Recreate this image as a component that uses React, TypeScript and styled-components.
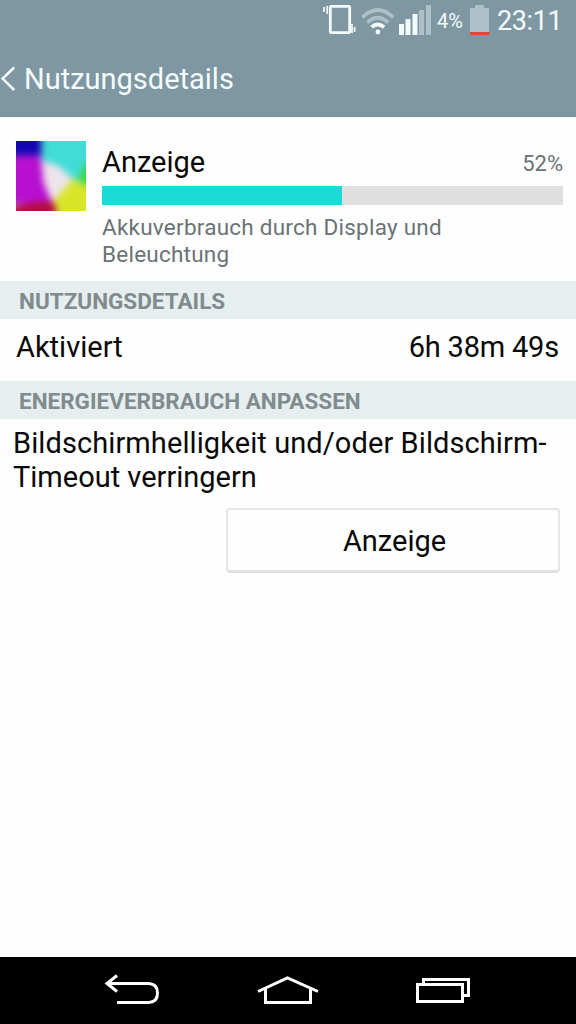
import React from 'react';
import styled, { createGlobalStyle } from 'styled-components';

const GlobalStyle = createGlobalStyle`
  * { box-sizing: border-box; }
  body { margin: 0; background: #fefefe; font-family: Roboto, "Liberation Sans", sans-serif; color: #080808; }
`;

const Screen = styled.div`
  width: 576px;
  height: 1024px;
  display: flex;
  flex-direction: column;
  background: #fefefe;
  overflow: hidden;
`;

const Header = styled.header`
  height: 117px;
  background: #7f97a2;
  border-bottom: 1px solid #788c96;
  color: #f4fbfd;
`;

const StatusBar = styled.div`
  height: 42px;
  display: flex;
  justify-content: flex-end;
  padding-right: 13px;
`;

const StatusIcons = styled.svg`
  flex: none;
  display: block;
`;

const Label = styled.span<{ $size: number; $line: number; $spacing?: number; $color?: string }>`
  display: block;
  white-space: nowrap;
  font-size: ${(p) => p.$size}px;
  line-height: ${(p) => p.$line}px;
  letter-spacing: ${(p) => p.$spacing ?? 0}px;
  color: ${(p) => p.$color ?? 'inherit'};
`;

const BatteryLevel = styled.div`
  width: 33px;
  padding-left: 1px;
`;

const BatteryIcon = styled.svg`
  flex: none;
`;

const Clock = styled.div`
  width: 72px;
  padding-left: 6px;
`;

const TitleBar = styled.div`
  height: 74px;
  display: flex;
  align-items: center;
`;

const BackChevron = styled.svg`
  flex: none;
  width: 24px;
  height: 30px;
`;

const Summary = styled.section`
  height: 164px;
  display: flex;
  padding: 24px 13px 0 16px;
`;

const AppIcon = styled.svg`
  flex: none;
  margin-right: 16px;
`;

const SummaryBody = styled.div`
  flex: 1;
`;

const SummaryHead = styled.div`
  height: 45px;
  display: flex;
  justify-content: space-between;
  padding-top: 3px;
`;

const Track = styled.div`
  height: 19px;
  background: #dfdfdf;
  margin-bottom: 9px;
`;

const Fill = styled.div`
  height: 100%;
  background: #1cdad5;
`;

const SectionTitle = styled.h2`
  height: 38px;
  margin: 0;
  padding: 2px 19px 0;
  background: #e6eef0;
  color: #808b8d;
  font-size: 22.5px;
  font-weight: 700;
  line-height: 37px;
`;

const Row = styled.div`
  height: 62px;
  display: flex;
  justify-content: space-between;
  padding: 10px 17px 0 16px;
`;

const Advice = styled.section`
  flex: 1;
  display: flex;
  flex-direction: column;
  padding: 7px 16px 0 13px;
`;

const ActionButton = styled.button`
  align-self: flex-end;
  width: 334px;
  height: 65px;
  margin: 14px 0 0;
  padding: 1px 0 0 3px;
  display: flex;
  align-items: center;
  justify-content: center;
  border: 2px solid #e7e7e7;
  border-bottom: 3px solid #e0e0e0;
  border-radius: 4px;
  background: #fefefe;
  color: inherit;
  font-family: inherit;
`;

const NavBar = styled.nav`
  height: 67px;
  background: #000;
`;

const App = () => (
  <>
    <GlobalStyle />
    <Screen>
      <Header>
        <StatusBar>
          <StatusIcons width="114" height="42" viewBox="322 0 114 42">
            <rect x="330.3" y="6.3" width="19.4" height="26.4" rx="1" fill="none" stroke="#f4fbfd" strokeWidth="2.8" />
            <path d="M324 7v5M327.200 6v8M352 24v9M354.600 27v5" stroke="#f4fbfd" strokeWidth="1.7" fill="none" />
            <g fill="none" strokeWidth="3.8">
              <path d="M362.300 17.400Q377.700 2.800 393.200 17.400" stroke="#adbfc7" />
              <path d="M367.300 22.600Q377.700 13 388.200 22.600" stroke="#adbfc7" />
              <path d="M371.600 27.200Q377.700 21.800 384 27.200" stroke="#f4fbfd" />
            </g>
            <circle cx="377.9" cy="32" r="2.4" fill="#f4fbfd" />
            <path d="M399 24h5v11h-5zM405.500 19h5v16h-5zM412.500 14h5v21h-5z" fill="#f4fbfd" />
            <path d="M419 10h5v25h-5zM426 5h5v30h-5z" fill="#adbfc7" />
          </StatusIcons>
          <BatteryLevel>
            <Label $size={20} $line={42}>4%</Label>
          </BatteryLevel>
          <BatteryIcon width="22" height="42" viewBox="469 0 22 42">
            <path d="M475 5h9v3h5v24h-19V8h5z" fill="#adbfc7" />
            <path d="M470 32h19.500v3h-19.500z" fill="#dc4a32" />
          </BatteryIcon>
          <Clock>
            <Label $size={27} $line={43} $spacing={-0.4}>23:11</Label>
          </Clock>
        </StatusBar>
        <TitleBar>
          <BackChevron viewBox="0 0 24 30">
            <path d="M14.200 3.500L2.600 14.600L14.200 26" fill="none" stroke="#f4fbfd" strokeWidth="2.5" />
          </BackChevron>
          <Label $size={29} $line={76}>Nutzungsdetails</Label>
        </TitleBar>
      </Header>

      <Summary>
        <AppIcon width="70" height="70" viewBox="0 0 71 71">
          <defs>
            <filter id="soft" x="-20%" y="-20%" width="140%" height="140%" colorInterpolationFilters="sRGB">
              <feGaussianBlur stdDeviation="3.6" />
            </filter>
            <clipPath id="frame">
              <rect width="71" height="71" />
            </clipPath>
          </defs>
          <g clipPath="url(#frame)">
            <g filter="url(#soft)">
              <rect x="-15" y="-15" width="105" height="105" fill="#ece4ec" />
              <path d="M-15-15H26V15H-15z" fill="#1205b4" />
              <path d="M-15 15H25L28 42L37 64H-15z" fill="#b80fd0" />
              <path d="M26-15H90V42H62L43 25L26 20z" fill="#40dcd5" />
              <path d="M64 36L72 22L90 15V54L72 50z" fill="#3ddb38" />
              <path d="M58 38L72 46H90V90H42L37 62z" fill="#d9e529" />
              <path d="M-15 68L20 62L38 61L46 90H-15z" fill="#b60c40" />
            </g>
          </g>
        </AppIcon>
        <SummaryBody>
          <SummaryHead>
            <Label $size={29} $line={36}>Anzeige</Label>
            <Label $size={22} $line={40} $color="#6b7276">52%</Label>
          </SummaryHead>
          <Track>
            <Fill style={{ width: '52.1%' }} />
          </Track>
          <Label $size={22.5} $line={26.5} $spacing={0.24} $color="#6b7276">Akkuverbrauch durch Display und</Label>
          <Label $size={22.5} $line={26.5} $spacing={0.24} $color="#6b7276">Beleuchtung</Label>
        </SummaryBody>
      </Summary>

      <SectionTitle>NUTZUNGSDETAILS</SectionTitle>
      <Row>
        <Label $size={29} $line={36}>Aktiviert</Label>
        <Label $size={29} $line={36} $spacing={-0.2}>6h 38m 49s</Label>
      </Row>
      <SectionTitle>ENERGIEVERBRAUCH ANPASSEN</SectionTitle>

      <Advice>
        <Label $size={29} $line={34} $spacing={0.09}>Bildschirmhelligkeit und/oder Bildschirm-</Label>
        <Label $size={29} $line={34}>Timeout verringern</Label>
        <ActionButton>
          <Label $size={29} $line={36}>Anzeige</Label>
        </ActionButton>
      </Advice>

      <NavBar>
        <svg width="576" height="67" viewBox="0 957 576 67" fill="none" stroke="#fff" strokeWidth="3">
          <path d="M107 983.500H149Q157.500 984 157.500 993Q157.500 1002 149 1002.500H117M117 975.500L107 983.500L117 991.500" />
          <path d="M258 991.500L287.500 978L318 991.500M265.500 989V1002.500H310.500V989" />
          <path d="M417.500 984.500H462.500V1001.500H417.500zM423.500 984V979.500H468.500V995.500H463" />
        </svg>
      </NavBar>
    </Screen>
  </>
);

export default App;
